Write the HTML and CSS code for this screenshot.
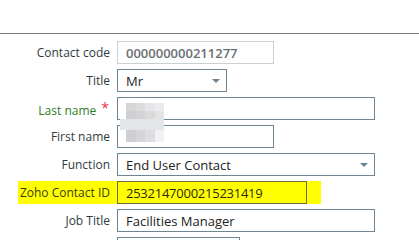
FILE: index.html
```html
<!DOCTYPE html>
<html>
<head>
    <link rel="stylesheet" href="styles.css">
</head>
<body>
    <div class="header"></div>
    <div class="form">
        <div class="row">
            <label>Contact code</label>
            <input type="text" class="field w157 readonly" value="000000000211277" readonly>
        </div>
        <div class="row">
            <label>Title</label>
            <div class="field select w110">
                <span>Mr</span>
                <svg class="arrow" width="8" height="4" viewBox="0 0 8 4"><path d="M0 0H8L4 4Z" fill="#6b8190"/></svg>
            </div>
        </div>
        <div class="row">
            <label class="required">Last name<span class="star">*</span></label>
            <input type="text" class="field w258" value="">
        </div>
        <div class="row">
            <label>First name</label>
            <input type="text" class="field w157" value="">
        </div>
        <div class="row">
            <label>Function</label>
            <div class="field select w258">
                <span>End User Contact</span>
                <svg class="arrow" width="8" height="4" viewBox="0 0 8 4"><path d="M0 0H8L4 4Z" fill="#6b8190"/></svg>
            </div>
        </div>
        <div class="row mark">
            <label>Zoho Contact ID</label>
            <input type="text" class="field w190 tight" value="2532147000215231419">
        </div>
        <div class="row">
            <label>Job Title</label>
            <input type="text" class="field w258" value="Facilities Manager">
        </div>
        <div class="row">
            <label></label>
            <input type="text" class="field w123" value="">
        </div>

        <!-- blurred name -->
        <div class="blur">
            <div class="cells top">
                <i style="background:#d6d6d8"></i><i style="background:#dcdcdc"></i><i style="background:#e6e6ea"></i><i style="background:#ebebee"></i>
                <i style="background:#cfcfd1"></i><i style="background:#d4d4d6"></i><i style="background:#dadada"></i><i style="background:#e4e4e8"></i>
            </div>
            <div class="band"></div>
            <div class="cells bottom">
                <i style="background:#cfcfd2"></i><i style="background:#d7d3d8"></i><i style="background:#dcdde0"></i><i style="background:#f2f2f4"></i>
            </div>
        </div>
    </div>
</body>
</html>
```

FILE: styles.css
```css
body {
    margin: 0;
    font-family: "Open Sans", "Noto Sans", sans-serif;
    font-size: 12px;
    color: #333;
    background: #fff;
    overflow: hidden;
}
.header {
    height: 33px;
    border-bottom: 1px solid #787878;
}
.form {
    position: relative;
    padding-top: 7px;
}
.row {
    display: flex;
    align-items: center;
    height: 23px;
    margin-bottom: 5px;
}
.row label {
    width: 110px;
    margin-right: 7px;
    text-align: right;
    flex-shrink: 0;
    color: #2f3a40;
}
.row label.required {
    color: #2e7d1f;
}
.star {
    color: #e8315a;
    font-size: 14px;
    vertical-align: 2px;
    margin-left: 5px;
    margin-right: 1px;
}
.row.mark {
    margin-left: 18px;
    width: 303px;
    background: #ffff00;
}
.row.mark label {
    width: 92px;
    color: #3a3a10;
}
.row.mark .field {
    background: #ffff00;
    border-color: #6e6e3c;
    color: #2a2a10;
}
.field {
    box-sizing: border-box;
    height: 23px;
    border: 1px solid #6c8692;
    padding: 0 8px;
    font-family: inherit;
    font-size: 13px;
    color: #222;
    background: #fff;
    outline: none;
    margin: 0;
}
.field.tight {
    letter-spacing: -0.25px;
}
.field.readonly {
    border-color: #c6d0d5;
    color: #6a6e72;
    font-weight: 600;
}
.select {
    display: flex;
    align-items: center;
    justify-content: space-between;
    padding-right: 6px;
}
.arrow {
    display: block;
}
.w110 { width: 110px; }
.w123 { width: 123px; }
.w157 { width: 157px; }
.w190 { width: 190px; }
.w258 { width: 258px; }

.blur {
    position: absolute;
    left: 120px;
    top: 69px;
    width: 44px;
}
.cells {
    display: grid;
    margin-left: 6px;
}
.cells.top {
    grid-template-columns: repeat(4, 1fr);
    grid-auto-rows: 8px;
}
.cells.bottom {
    grid-template-columns: repeat(4, 1fr);
    height: 12px;
}
.band {
    height: 11px;
    background: #e2e6e8;
}
```
